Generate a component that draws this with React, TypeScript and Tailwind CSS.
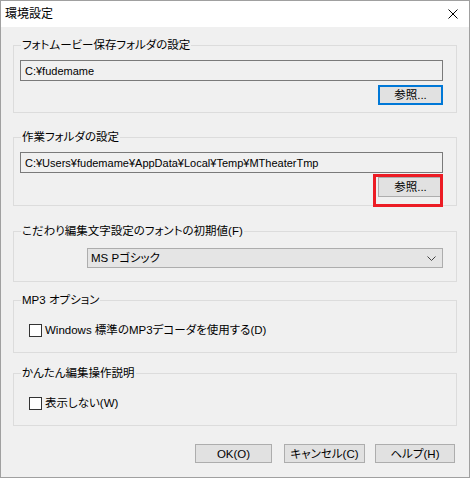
import React from 'react';

function Group({ label, className, children }: { label: string; className: string; children: React.ReactNode }) {
  return (
    <div className={`relative border border-[#dcdcdc] ${className}`}>
      <span className="absolute -top-[8px] left-[7px] px-[1px] bg-[#f0f0f0] leading-[15px] whitespace-nowrap">
        {label}
      </span>
      {children}
    </div>
  );
}

function Checkbox({ label }: { label: string }) {
  return (
    <div className="flex items-center gap-[3px] leading-[14px]">
      <span className="w-[13px] h-[13px] border border-[#333333] bg-white" />
      <span>{label}</span>
    </div>
  );
}

export default function App() {
  return (
    <div className="w-[470px] h-[478px] border border-[#a0a0a0] bg-[#f0f0f0] flex flex-col text-[11.5px] text-black font-['Liberation_Sans','Noto_Sans_CJK_JP',sans-serif] [font-feature-settings:'palt']">
      <div className="h-[26px] bg-white flex items-center justify-between pl-[4px] pr-[11px]">
        <span className="leading-[14px] text-[12px]">環境設定</span>
        <svg width="10" height="10" viewBox="0 0 10 10" className="text-black">
          <path d="M0.5 0.5L9.5 9.5M9.5 0.5L0.5 9.5" stroke="currentColor" strokeWidth="1" />
        </svg>
      </div>

      <div className="px-[12px] flex flex-col">
        <Group label="フォトムービー保存フォルダの設定" className="mt-[18px] pt-[14px] pb-[7px] pl-[6px] pr-[13px]">
          <div className="h-[21px] border border-[#7a7a7a] bg-[#f0f0f0] flex items-center pl-[4px] text-[11px] leading-[14px]">
            C:¥fudemame
          </div>
          <div className="flex justify-end mt-[4px]">
            <button className="w-[65px] h-[20px] border-2 border-[#0078d7] bg-[#e1e1e1] leading-[14px]">
              参照...
            </button>
          </div>
        </Group>

        <Group label="作業フォルダの設定" className="mt-[24px] pt-[14px] pb-[8px] pl-[6px] pr-[13px]">
          <div className="h-[21px] border border-[#7a7a7a] bg-[#f0f0f0] flex items-center pl-[4px] text-[11px] leading-[14px]">
            C:¥Users¥fudemame¥AppData¥Local¥Temp¥MTheaterTmp
          </div>
          <div className="flex justify-end mt-[4px]">
            <button className="w-[65px] h-[20px] border border-[#adadad] bg-[#e1e1e1] leading-[14px]">
              参照...
            </button>
          </div>
          <div className="absolute left-[359px] top-[36px] w-[70px] h-[33px] border-[3px] border-[#ec1c24]" />
        </Group>

        <Group label="こだわり編集文字設定のフォントの初期値(F)" className="mt-[25px] pt-[16px] pb-[13px] pl-[73px] pr-[13px]">
          <div className="h-[20px] border border-[#adadad] bg-[#e5e5e5] flex items-center justify-between pl-[3px] pr-[6px] leading-[14px]">
            <span>MS Pゴシック</span>
            <svg width="9" height="5" viewBox="0 0 9 5" className="text-[#444]">
              <path d="M0.5 0.5L4.5 4.5L8.5 0.5" fill="none" stroke="currentColor" strokeWidth="1" />
            </svg>
          </div>
        </Group>

        <Group label="MP3 オプション" className="mt-[18px] pt-[22px] pb-[15px] pl-[15px]">
          <Checkbox label="Windows 標準のMP3デコーダを使用する(D)" />
        </Group>

        <Group label="かんたん編集操作説明" className="mt-[20px] pt-[22px] pb-[15px] pl-[15px]">
          <Checkbox label="表示しない(W)" />
        </Group>

        <div className="flex mt-[18px] pl-[182px] gap-[12px]">
          <button className="w-[77px] h-[19px] border border-[#adadad] bg-[#e1e1e1] leading-[14px]">OK(O)</button>
          <button className="w-[81px] h-[19px] border border-[#adadad] bg-[#e1e1e1] leading-[14px]">キャンセル(C)</button>
          <button className="w-[80px] h-[19px] border border-[#adadad] bg-[#e1e1e1] leading-[14px] -ml-[2px]">ヘルプ(H)</button>
        </div>
      </div>
    </div>
  );
}
